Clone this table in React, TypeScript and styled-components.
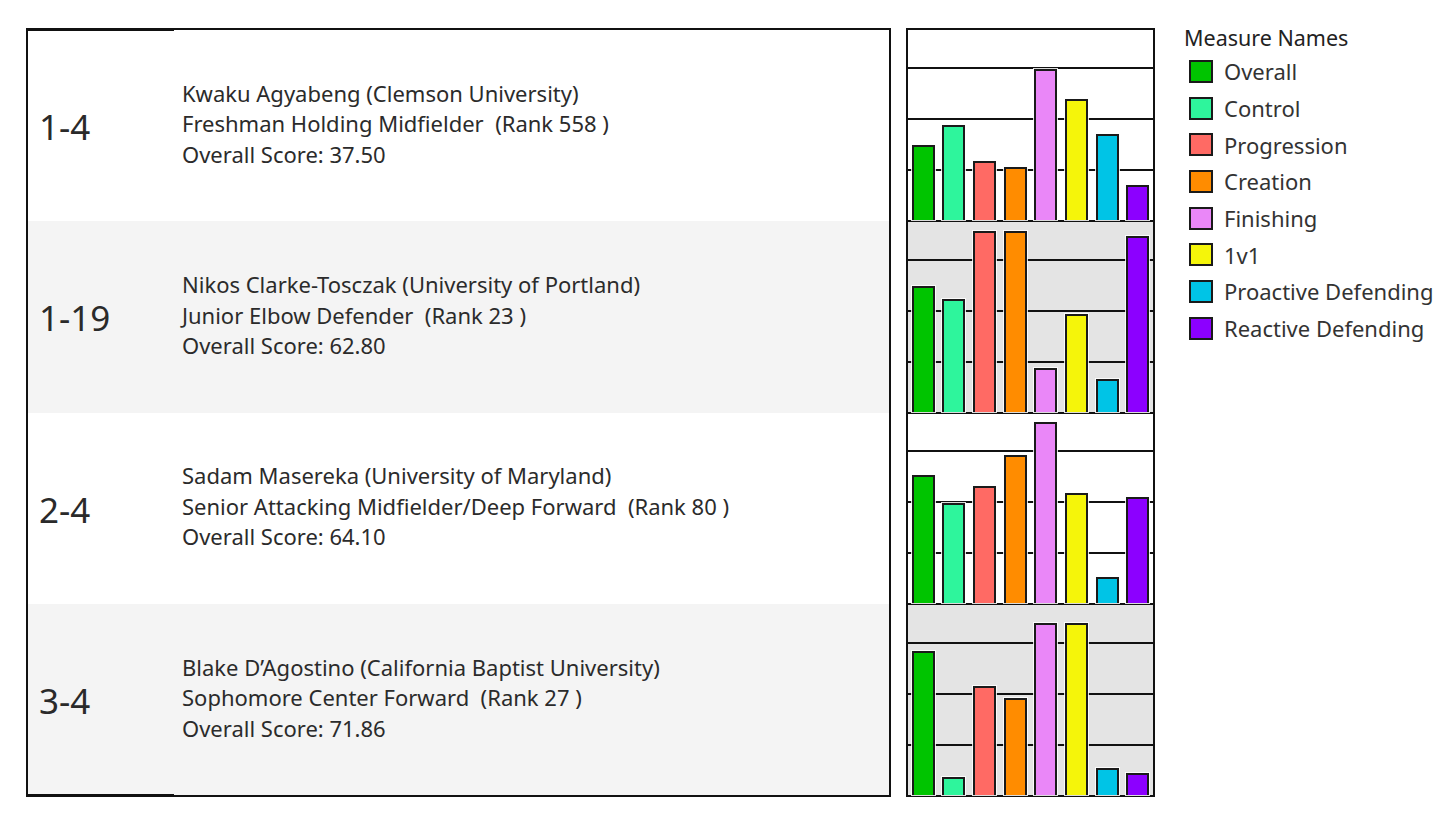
import styled, { createGlobalStyle } from 'styled-components';

// Measure colours, same order as the legend
const MEASURES = [
  { name: 'Overall', color: '#00c400' },
  { name: 'Control', color: '#2ef59c' },
  { name: 'Progression', color: '#ff6a64' },
  { name: 'Creation', color: '#ff8c00' },
  { name: 'Finishing', color: '#ea87f8' },
  { name: '1v1', color: '#f5f50a' },
  { name: 'Proactive Defending', color: '#00c4e6' },
  { name: 'Reactive Defending', color: '#8c00ff' },
];

const PLAYERS = [
  {
    pick: '1-4',
    name: 'Kwaku Agyabeng (Clemson University)',
    role: 'Freshman Holding Midfielder',
    rank: 558,
    score: '37.50',
    values: [37.5, 47.5, 29.5, 26.5, 75.5, 60.5, 43, 17.5],
  },
  {
    pick: '1-19',
    name: 'Nikos Clarke-Tosczak (University of Portland)',
    role: 'Junior Elbow Defender',
    rank: 23,
    score: '62.80',
    values: [62.8, 56.5, 90.5, 90.5, 22, 49, 16.5, 88],
  },
  {
    pick: '2-4',
    name: 'Sadam Masereka (University of Maryland)',
    role: 'Senior Attacking Midfielder/Deep Forward',
    rank: 80,
    score: '64.10',
    values: [64.1, 50, 58.5, 74, 90.5, 55, 13, 53],
  },
  {
    pick: '3-4',
    name: 'Blake D\u2019Agostino (California Baptist University)',
    role: 'Sophomore Center Forward',
    rank: 27,
    score: '71.86',
    values: [71.86, 9, 54.5, 48.5, 86, 86, 13.5, 11],
  },
];

const PX_PER_POINT = 2;

const GlobalStyle = createGlobalStyle`
  body {
    margin: 0;
    background: #fff;
    font-family: "Noto Sans", "Open Sans", sans-serif;
    color: #2b2b2b;
  }
`;

const Page = styled.div`
  display: flex;
  align-items: flex-start;
  padding: 28px 0 0 26px;
`;

// Left table with the pick / player text
const Table = styled.div`
  width: 865px;
  height: 769px;
  box-sizing: border-box;
  border: 2px solid #111;
  display: flex;
  flex-direction: column;
`;

const Row = styled.div`
  flex: 1;
  display: grid;
  grid-template-columns: 146px 1fr;
  align-items: center;
  background: #fff;

  &:nth-child(even) {
    background: #f4f4f4;
  }
`;

// the pick column carries a slightly heavier outer edge at top and bottom
const Pick = styled.div<{ $edge?: 'top' | 'bottom' }>`
  align-self: stretch;
  display: flex;
  align-items: center;
  padding-left: 11px;
  padding-top: 2px;
  font-size: 35px;
  line-height: 1;
  color: #2a2a2a;
  box-shadow: ${(p) =>
    p.$edge === 'top'
      ? 'inset 0 1px 0 #111'
      : p.$edge === 'bottom'
        ? 'inset 0 -1px 0 #111'
        : 'none'};
`;

const Info = styled.div`
  padding-left: 8px;
  font-size: 22px;
  line-height: 30.5px;
  padding-bottom: 4px;
`;

// Middle bar chart panel
const Chart = styled.div`
  margin-left: 15px;
  width: 249px;
  height: 769px;
  box-sizing: border-box;
  border: 2px solid #111;
  display: flex;
  flex-direction: column;
`;

const ChartRow = styled.div<{ $shaded: boolean }>`
  flex: 1;
  display: flex;
  align-items: flex-end;
  background-color: ${(p) => (p.$shaded ? '#e4e4e4' : '#fff')};
  background-image: repeating-linear-gradient(
    to top,
    transparent 0,
    transparent 49px,
    #111 49px,
    #111 51px
  );
  border-bottom: 2px solid #111;

  &:last-child {
    border-bottom: none;
  }
`;

const Band = styled.div`
  flex: 1;
  display: flex;
  justify-content: center;
  align-items: flex-end;
  height: 100%;
`;

const Bar = styled.div<{ $color: string }>`
  width: 23px;
  box-sizing: border-box;
  background: ${(p) => p.$color};
  border: 2px solid #1a1a1a;
  border-bottom: none;
  box-shadow: 0 0 0 1px rgba(255, 255, 255, 0.85);
`;

// Right legend
const Legend = styled.div`
  margin-left: 29px;
`;

const LegendTitle = styled.div`
  font-size: 21.5px;
  line-height: 20px;
  color: #222;
  margin-bottom: 5px;
`;

const LegendItem = styled.div`
  display: flex;
  align-items: center;
  gap: 11px;
  height: 36.7px;
  padding-left: 5px;
  font-size: 22px;
  color: #333;
`;

const Swatch = styled.span<{ $color: string }>`
  width: 24px;
  height: 23px;
  flex-shrink: 0;
  box-sizing: border-box;
  background: ${(p) => p.$color};
  border: 2px solid #1a1a1a;
`;

export default function App() {
  return (
    <>
      <GlobalStyle />
      <Page>
        <Table>
          {PLAYERS.map((p, i) => (
            <Row key={p.pick}>
              <Pick $edge={i === 0 ? 'top' : i === PLAYERS.length - 1 ? 'bottom' : undefined}>
                {p.pick}
              </Pick>
              <Info>
                <div>{p.name}</div>
                <div>
                  {p.role}&nbsp; (Rank {p.rank} )
                </div>
                <div>Overall Score: {p.score}</div>
              </Info>
            </Row>
          ))}
        </Table>

        <Chart>
          {PLAYERS.map((p, i) => (
            <ChartRow key={p.pick} $shaded={i % 2 === 1}>
              {p.values.map((v, j) => (
                <Band key={MEASURES[j].name}>
                  <Bar $color={MEASURES[j].color} style={{ height: v * PX_PER_POINT }} />
                </Band>
              ))}
            </ChartRow>
          ))}
        </Chart>

        <Legend>
          <LegendTitle>Measure Names</LegendTitle>
          {MEASURES.map((m) => (
            <LegendItem key={m.name}>
              <Swatch $color={m.color} />
              {m.name}
            </LegendItem>
          ))}
        </Legend>
      </Page>
    </>
  );
}
